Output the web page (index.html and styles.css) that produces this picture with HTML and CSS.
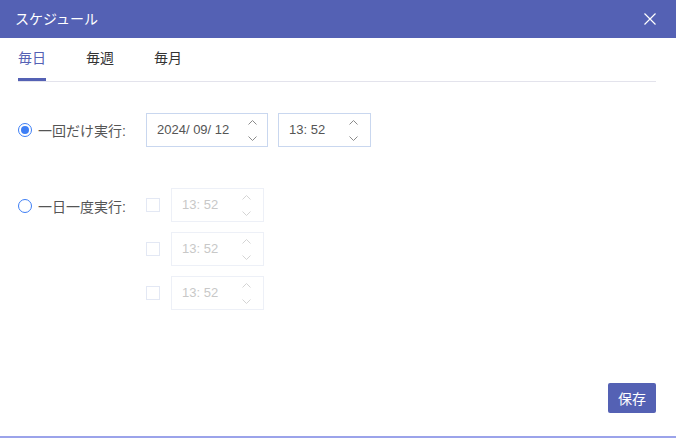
FILE: index.html
```html
<!DOCTYPE html>
<html lang="ja">
<head>
<meta charset="utf-8">
<link rel="stylesheet" href="styles.css">
</head>
<body>
<div class="dialog">
  <div class="header">
    <span class="title">スケジュール</span>
    <svg class="close" width="12" height="12" viewBox="0 0 12 12"><path d="M0.5 0.5L11.5 11.5M11.5 0.5L0.5 11.5" stroke="#fff" stroke-width="1.2" fill="none"/></svg>
  </div>
  <div class="tabs">
    <div class="tab active">毎日</div>
    <div class="tab">毎週</div>
    <div class="tab">毎月</div>
  </div>
  <div class="content">
    <div class="row">
      <label class="opt"><span class="radio checked"></span><span>一回だけ実行:</span></label>
      <div class="field date">
        <span class="val">2024/ 09/ 12</span>
        <span class="spin">
          <svg width="9" height="5" viewBox="0 0 9 5"><polyline points="0.5,4.5 4.5,0.5 8.5,4.5" fill="none" stroke="#8a8a8a"/></svg>
          <svg width="9" height="5" viewBox="0 0 9 5"><polyline points="0.5,0.5 4.5,4.5 8.5,0.5" fill="none" stroke="#8a8a8a"/></svg>
        </span>
      </div>
      <div class="field time first">
        <span class="val">13: 52</span>
        <span class="spin">
          <svg width="9" height="5" viewBox="0 0 9 5"><polyline points="0.5,4.5 4.5,0.5 8.5,4.5" fill="none" stroke="#8a8a8a"/></svg>
          <svg width="9" height="5" viewBox="0 0 9 5"><polyline points="0.5,0.5 4.5,4.5 8.5,0.5" fill="none" stroke="#8a8a8a"/></svg>
        </span>
      </div>
    </div>
    <div class="row row2">
      <label class="opt"><span class="radio"></span><span>一日一度実行:</span></label>
      <div class="slots">
        <div class="slot">
          <span class="check"></span>
          <div class="field time disabled">
            <span class="val">13: 52</span>
            <span class="spin">
              <svg width="9" height="5" viewBox="0 0 9 5"><polyline points="0.5,4.5 4.5,0.5 8.5,4.5" fill="none" stroke="#d4d4d4"/></svg>
              <svg width="9" height="5" viewBox="0 0 9 5"><polyline points="0.5,0.5 4.5,4.5 8.5,0.5" fill="none" stroke="#d4d4d4"/></svg>
            </span>
          </div>
        </div>
        <div class="slot">
          <span class="check"></span>
          <div class="field time disabled">
            <span class="val">13: 52</span>
            <span class="spin">
              <svg width="9" height="5" viewBox="0 0 9 5"><polyline points="0.5,4.5 4.5,0.5 8.5,4.5" fill="none" stroke="#d4d4d4"/></svg>
              <svg width="9" height="5" viewBox="0 0 9 5"><polyline points="0.5,0.5 4.5,4.5 8.5,0.5" fill="none" stroke="#d4d4d4"/></svg>
            </span>
          </div>
        </div>
        <div class="slot">
          <span class="check"></span>
          <div class="field time disabled">
            <span class="val">13: 52</span>
            <span class="spin">
              <svg width="9" height="5" viewBox="0 0 9 5"><polyline points="0.5,4.5 4.5,0.5 8.5,4.5" fill="none" stroke="#d4d4d4"/></svg>
              <svg width="9" height="5" viewBox="0 0 9 5"><polyline points="0.5,0.5 4.5,4.5 8.5,0.5" fill="none" stroke="#d4d4d4"/></svg>
            </span>
          </div>
        </div>
      </div>
    </div>
  </div>
  <div class="footer">
    <button class="save">保存</button>
  </div>
</div>
</body>
</html>
```

FILE: styles.css
```css
* { box-sizing: border-box; }
html, body { margin: 0; padding: 0; background: #fff; }
body {
  font-family: "Liberation Sans", "Noto Sans CJK JP", sans-serif;
  font-size: 14px;
  color: #333;
}
.dialog {
  width: 676px;
  height: 438px;
  display: flex;
  flex-direction: column;
  border-bottom: 2px solid #9ba3ea;
}
.header {
  height: 38px;
  flex: none;
  background: #5461b4;
  display: flex;
  align-items: center;
  justify-content: space-between;
  padding: 0 20px 0 15px;
}
.title { color: #fff; font-size: 14px; line-height: 20px; }
.close { display: block; }
.tabs {
  display: flex;
  gap: 40px;
  margin: 0 20px 0 18px;
  border-bottom: 1px solid #e3e3ec;
}
.tab {
  padding: 10px 0;
  line-height: 20px;
  font-size: 14px;
  color: #333;
  border-bottom: 3px solid transparent;
}
.tab.active { color: #5461b4; border-bottom-color: #5461b4; }
.content {
  flex: 1;
  padding: 31px 0 0 18px;
}
.row {
  display: flex;
  align-items: center;
  height: 34px;
}
.row2 {
  margin-top: 41px;
  align-items: flex-start;
  height: auto;
}
.opt {
  width: 128px;
  height: 34px;
  display: flex;
  align-items: center;
  gap: 6px;
  color: #555;
  font-size: 14px;
  flex: none;
}
.row2 .opt { padding-top: 1px; }
.radio {
  width: 14px;
  height: 14px;
  border-radius: 50%;
  border: 1px solid #3d7ef5;
  display: flex;
  align-items: center;
  justify-content: center;
  flex: none;
}
.radio.checked::after {
  content: "";
  width: 8px;
  height: 8px;
  border-radius: 50%;
  background: #3d7ef5;
}
.field {
  height: 34px;
  border: 1px solid #c9d7ef;
  display: flex;
  align-items: center;
  justify-content: space-between;
  padding: 0 12px 0 10px;
  flex: none;
}
.field .val { font-size: 13px; color: #555; line-height: 16px; }
.field.date { width: 122px; padding-right: 10px; }
.field.time { width: 93px; margin-left: 11px; padding-left: 10px; padding-right: 12px; }
.field.time.first { margin-left: 10px; }
.spin {
  display: flex;
  flex-direction: column;
  gap: 11px;
  padding-top: 1px;
}
.spin svg { display: block; }
.field.disabled { border-color: #edf0f7; }
.field.disabled .val { color: #c8c8c8; }
.slots { display: flex; flex-direction: column; gap: 10px; }
.slot { display: flex; align-items: center; }
.slot .field.time { margin-left: 11px; }
.check {
  width: 14px;
  height: 14px;
  border: 1px solid #e3e8f4;
  flex: none;
}
.footer {
  display: flex;
  justify-content: flex-end;
  padding: 0 20px 23px 0;
}
.save {
  width: 48px;
  height: 30px;
  border: none;
  border-radius: 2px;
  background: #5461b4;
  color: #fff;
  font-family: "Liberation Sans", "Noto Sans CJK JP", sans-serif;
  font-size: 14px;
  padding: 0;
}
```
